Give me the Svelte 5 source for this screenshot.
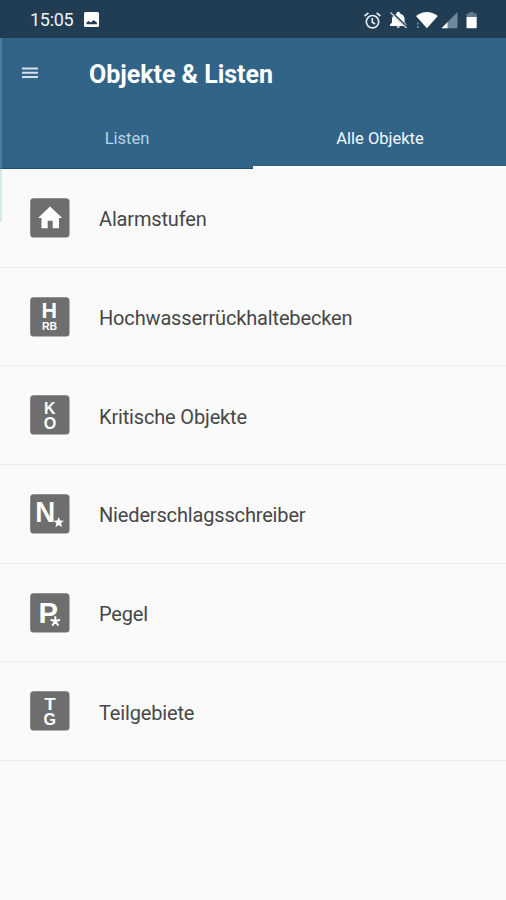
<script>
  const items = [
    { label: 'Alarmstufen', icon: 'home' },
    { label: 'Hochwasserrückhaltebecken', icon: 'hrb' },
    { label: 'Kritische Objekte', icon: 'ko' },
    { label: 'Niederschlagsschreiber', icon: 'n' },
    { label: 'Pegel', icon: 'p' },
    { label: 'Teilgebiete', icon: 'tg' }
  ];
</script>

<div class="screen">
  <div class="status">
    <span class="clock">15:05</span>
    <svg class="photo" width="15" height="15" viewBox="0 0 14 14">
      <rect width="14" height="14" rx="1.5" fill="#fff" />
      <path d="M2.3 11.5V9.800l2-1.300 2 1.300 2.800-2.300 3 2.500v1.500z" fill="#213d54" />
    </svg>
    <svg class="system" width="116" height="22" viewBox="362 8 116 22">
      <g fill="none" stroke="#e4ebef" stroke-width="1.7">
        <circle cx="372.5" cy="20.7" r="6.2" />
        <path d="M372.3 17v4.2l2.8 1.7M364.6 15l3.8-3.2M380.4 15l-3.8-3.2" />
      </g>
      <path d="M390 25v-1.500l2-2v-3.200c0-3.200 2-5.200 4.800-5.800v-1.200q1.500-1.300 3 0v1.200c2.900.6 4.800 2.800 4.800 5.800v3.200l2 2V25zM396.200 25.500h4q-2 2.800-4 0z" fill="#fff" />
      <path d="M391.500 11 407.500 26.500" stroke="#213d54" stroke-width="1.800" />
      <path d="M390.500 11.500 406.500 27" stroke="#cbd6dc" stroke-width="1.300" />
      <path d="M416 15q10.800-8 21.800 0L426.900 27.300z" fill="#fff" />
      <path d="M417.800 21.500v2M417.800 25v2" stroke="#8297a5" stroke-width="1.500" />
      <path d="M457.500 11v16.300H441.500z" fill="#70889a" />
      <path d="M447.500 21.200v6.100H441.500z" fill="#fff" />
      <path d="M469.300 11h4.400v1.500h3V16h-10.200v-3.500h2.800z" fill="#647b8b" />
      <path d="M466.500 16h10.200v10.300q0 1-1 1h-8.200q-1 0-1-1z" fill="#fff" />
    </svg>
  </div>

  <header>
    <div class="bar">
      <svg class="menu" width="16" height="12" viewBox="0 0 16 12">
        <path d="M0 1.500h16M0 5.700h16M0 9.900h16" stroke="#d3e0e9" stroke-width="2" />
      </svg>
      <h1>Objekte &amp; Listen</h1>
    </div>
    <nav>
      <div class="tab"><span>Listen</span></div>
      <div class="tab active"><span>Alle Objekte</span></div>
    </nav>
  </header>
  <div class="edge"></div>

  <ul>
    {#each items as item}
      <li>
        <svg class="tile" width="40" height="40" viewBox="0 0 40 40">
          <rect x="0.200" y="0.200" width="39.300" height="39.300" rx="3.500" fill="#6e6e6e" />
          <g fill="#fff">
            {#if item.icon === 'home'}
              <path d="M20 8.500 32.200 20H29v10.200h-6.300v-7.500h-5v7.500h-6.200V20H8z" />
            {:else if item.icon === 'hrb'}
              <text x="11.400" y="21.200" font-size="22" textLength="15.500" lengthAdjust="spacingAndGlyphs">H</text>
              <text x="12" y="32.500" font-size="10.300" textLength="15.200" lengthAdjust="spacingAndGlyphs">RB</text>
            {:else if item.icon === 'ko'}
              <text x="14" y="19" font-size="16" textLength="11.500" lengthAdjust="spacingAndGlyphs">K</text>
              <text x="13.800" y="33.800" font-size="16" textLength="12.500" lengthAdjust="spacingAndGlyphs">O</text>
            {:else if item.icon === 'n'}
              <text x="5.200" y="27.500" font-size="29" textLength="20" lengthAdjust="spacingAndGlyphs">N</text>
              <path d="m28.700 23 1.500 3.600 3.800.2-3 2.500 1 3.900-3.300-2.100-3.300 2.100 1-3.900-3-2.500 3.800-.2z" />
            {:else if item.icon === 'p'}
              <text x="8.500" y="29.700" font-size="29.500" textLength="19.500" lengthAdjust="spacingAndGlyphs">P</text>
              <path d="M25.300 23.300v5M20.600 26.800l4.700 1.500 4.700-1.500M22.200 32.600l3.100-4.300 3.100 4.300" fill="none" stroke="#6e6e6e" stroke-width="3.500" />
              <path d="M25.300 23.300v5M20.600 26.800l4.700 1.500 4.700-1.500M22.200 32.600l3.100-4.300 3.100 4.300" fill="none" stroke="#fff" stroke-width="2" />
            {:else}
              <text x="14.200" y="18.900" font-size="16" textLength="11.500" lengthAdjust="spacingAndGlyphs">T</text>
              <text x="13.600" y="33.500" font-size="16" textLength="12.500" lengthAdjust="spacingAndGlyphs">G</text>
            {/if}
          </g>
        </svg>
        <span class="label">{item.label}</span>
      </li>
    {/each}
  </ul>
</div>

<style>
  :global(body) { margin: 0; }
  .screen {
    position: relative;
    width: 506px;
    height: 900px;
    overflow: hidden;
    background: #fafafa;
    font-family: Roboto, "Liberation Sans", sans-serif;
  }
  .status {
    height: 38px;
    box-sizing: border-box;
    padding: 1px 28px 0 30px;
    display: flex;
    align-items: center;
    background: #213d54;
    color: #edf2f5;
  }
  .clock { font-size: 18px; line-height: 22px; letter-spacing: -0.300px; }
  .photo { margin-left: 11px; }
  .system { margin-left: auto; }
  header {
    height: 131px;
    background: #326488;
    display: flex;
    flex-direction: column;
  }
  .bar { height: 70px; display: flex; align-items: center; padding-left: 22px; }
  .menu { margin-right: 51px; }
  h1 { margin: 3px 0 0; font-size: 25px; line-height: 30px; font-weight: 700; color: #fff; white-space: nowrap; letter-spacing: -0.030px; }
  nav { flex: 1; display: flex; }
  .tab {
    flex: 1;
    box-sizing: border-box;
    display: flex;
    justify-content: center;
    padding: 21px 0 0 1px;
    border-bottom: 1px solid #1b4e77;
    color: #b9d2e4;
    font-size: 16.500px;
    line-height: 20px;
  }
  .active { color: #f5f9fb; border-bottom: 3px solid #fff; }
  .edge {
    position: absolute;
    left: 0;
    top: 38px;
    width: 2px;
    height: 184px;
    background: rgba(139, 190, 200, 0.300);
  }
  ul { margin: 0; padding: 0; list-style: none; }
  li {
    height: 98.700px;
    box-sizing: border-box;
    display: flex;
    align-items: center;
    padding-left: 30px;
    border-bottom: 1px solid #ededed;
  }
  .tile { font-family: "Liberation Sans", Arial, sans-serif; font-weight: 700; }
  .label { margin: 3px 0 0 29px; font-size: 20px; line-height: 26px; letter-spacing: -0.160px; color: #474747; white-space: nowrap; }
</style>
